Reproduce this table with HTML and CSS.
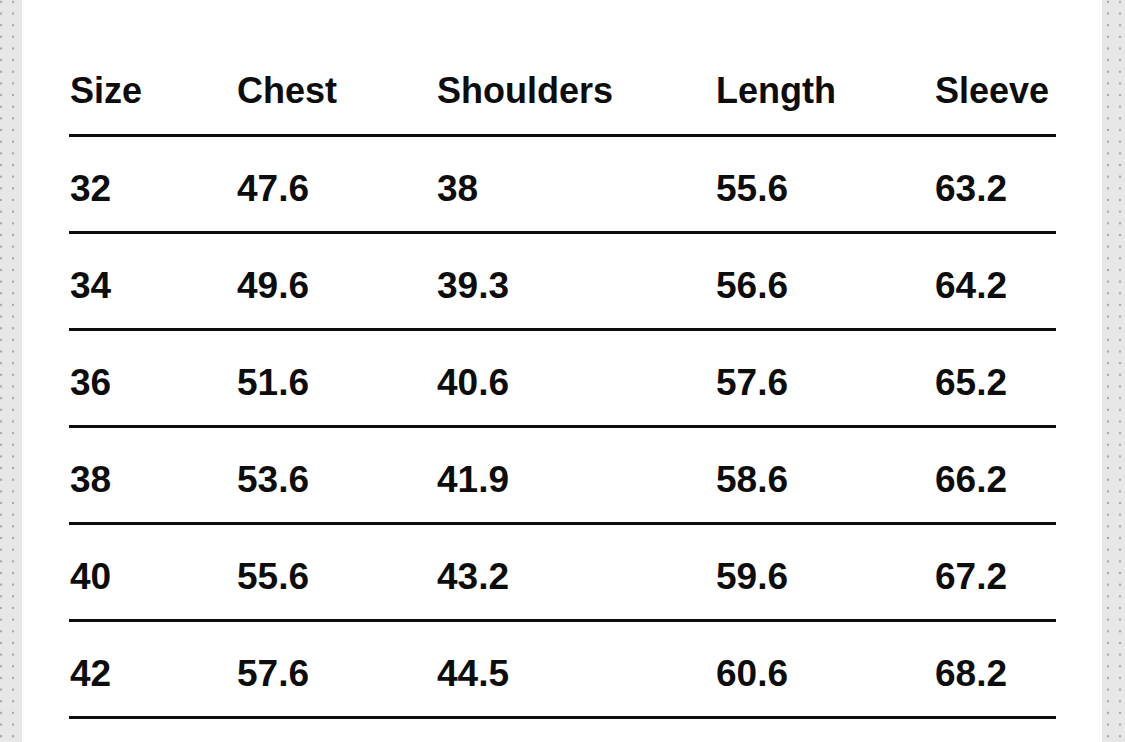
FILE: index.html
```html
<!DOCTYPE html>
<html lang="en">
<head>
<meta charset="utf-8">
<title>Size chart</title>
<link rel="stylesheet" href="styles.css">
</head>
<body>
<div class="page">
  <div class="strip strip-left"></div>
  <main class="panel">
    <div class="chart" role="table">
      <div class="row head" role="row">
        <div role="columnheader">Size</div>
        <div role="columnheader">Chest</div>
        <div role="columnheader">Shoulders</div>
        <div role="columnheader">Length</div>
        <div role="columnheader">Sleeve</div>
      </div>
      <div class="row" role="row"><div>32</div><div>47.6</div><div>38</div><div>55.6</div><div>63.2</div></div>
      <div class="row" role="row"><div>34</div><div>49.6</div><div>39.3</div><div>56.6</div><div>64.2</div></div>
      <div class="row" role="row"><div>36</div><div>51.6</div><div>40.6</div><div>57.6</div><div>65.2</div></div>
      <div class="row" role="row"><div>38</div><div>53.6</div><div>41.9</div><div>58.6</div><div>66.2</div></div>
      <div class="row" role="row"><div>40</div><div>55.6</div><div>43.2</div><div>59.6</div><div>67.2</div></div>
      <div class="row" role="row"><div>42</div><div>57.6</div><div>44.5</div><div>60.6</div><div>68.2</div></div>
    </div>
  </main>
  <div class="strip strip-right"></div>
</div>
</body>
</html>
```
FILE: styles.css
```css
html, body {
  margin: 0;
  padding: 0;
  height: 742px;
  overflow: hidden;
  background: #ffffff;
}

.page {
  display: grid;
  grid-template-columns: 22px 1fr 23px;
  height: 742px;
}

.strip {
  background-color: #e7e7e7;
  background-image: radial-gradient(circle, #a9a9a9 0 1.1px, transparent 1.6px);
  background-size: 12px 11.67px;
}

.strip-left {
  background-position: -5px -4px;
}

.strip-right {
  background-position: 0px -4px;
}

.panel {
  background: #ffffff;
  padding: 73px 46px 0 47px;
  font-family: "Liberation Sans", Arial, sans-serif;
  font-weight: 700;
  color: #0d0d0d;
}

.row {
  display: grid;
  grid-template-columns: 167px 200px 279px 219px 1fr;
  border-bottom: 3px solid #0d0d0d;
  padding: 33px 0 24px 1px;
  font-size: 37px;
  line-height: 37px;
}

.row.head {
  padding: 0 0 25px 1px;
  font-size: 36px;
  line-height: 36px;
}
```
